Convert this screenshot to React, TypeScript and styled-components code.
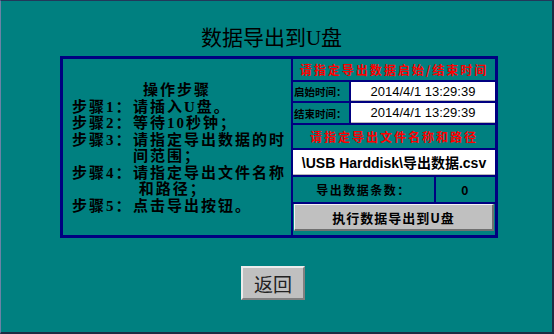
import React from "react"
import styled, { createGlobalStyle } from "styled-components"

const navy = "#000080"
const teal = "#008080"

const GlobalStyle = createGlobalStyle`
  html, body {
    margin: 0;
    padding: 0;
    background: ${teal};
  }
`

const Screen = styled.div`
  box-sizing: border-box;
  width: 554px;
  height: 334px;
  background: ${teal};
  border-top: 1px solid #22385a;
  border-left: 1px solid #6a82a6;
  border-right: 2px solid #1d2b42;
  border-bottom: 2px solid #1d2b42;
  display: flex;
  flex-direction: column;
  font-family: "Liberation Serif", "Noto Sans CJK SC", serif;
  color: #000;
`

const Title = styled.h1`
  margin: 24px 0 0 0;
  padding-right: 10px;
  text-align: center;
  font-size: 21px;
  font-weight: 400;
  line-height: 26px;
`

const Panel = styled.div`
  box-sizing: border-box;
  margin: 5px 0 0 59px;
  width: 438px;
  height: 182px;
  border: 3px solid ${navy};
  display: flex;
`

const Steps = styled.div`
  flex: 1;
  display: flex;
  flex-direction: column;
  justify-content: center;
  padding: 2px 0 0 9px;
  font-size: 15px;
  line-height: 16.5px;
  letter-spacing: 2px;
  font-weight: 700;
`

const StepsHeading = styled.div`
  text-align: center;
  padding-right: 9px;
`

const Step = styled.div`
  display: grid;
  grid-template-columns: 61px 1fr;
`

const StepLine = styled.div`
  white-space: pre;
`

const SideBar = styled.div`
  width: 202px;
  border-left: 2px solid ${navy};
  background: ${navy};
  display: grid;
  grid-template-rows: 21px 19px 20px 23px 25px 25px 1fr;
  row-gap: 2px;
`

const Notice = styled.div`
  background: ${teal};
  color: #ff0000;
  font-family: "Noto Sans CJK SC", sans-serif;
  font-size: 12px;
  font-weight: 700;
  letter-spacing: 2px;
  display: flex;
  align-items: center;
  justify-content: center;
`

const Row = styled.div<{ $cols: string }>`
  display: grid;
  grid-template-columns: ${p => p.$cols};
  column-gap: 2px;
`

const Label = styled.div<{ $size?: number; $center?: boolean }>`
  background: ${teal};
  font-family: "Noto Sans CJK SC", sans-serif;
  font-size: ${p => p.$size ?? 10.5}px;
  font-weight: 700;
  letter-spacing: ${p => (p.$center ? 1.5 : 0)}px;
  display: flex;
  align-items: center;
  justify-content: ${p => (p.$center ? "center" : "flex-start")};
  padding-left: ${p => (p.$center ? 0 : 1)}px;
  white-space: nowrap;
`

const Value = styled.div<{ $bold?: boolean; $size?: number }>`
  box-sizing: border-box;
  background: #fff;
  border-bottom: 1px solid #b8b8b8;
  font-family: "Liberation Sans", "Noto Sans CJK SC", sans-serif;
  font-size: ${p => p.$size ?? 13}px;
  font-weight: ${p => (p.$bold ? 700 : 400)};
  display: flex;
  align-items: center;
  justify-content: center;
  white-space: nowrap;
`

const ButtonCell = styled.div`
  background: ${teal};
  padding: 0 1px 4px 1px;
  display: flex;
`

const ActionButton = styled.button`
  flex: 1;
  margin: 0;
  padding: 0;
  background: #c0c0c0;
  border-top: 1px solid #f4f4f4;
  border-left: 1px solid #f4f4f4;
  border-right: 2px solid #707070;
  border-bottom: 2px solid #707070;
  font-family: "Noto Sans CJK SC", sans-serif;
  font-size: 13px;
  font-weight: 700;
  letter-spacing: 1px;
  color: #000;
`

const BackButton = styled.button`
  box-sizing: border-box;
  margin: 28px 0 0 240px;
  width: 64px;
  height: 34px;
  padding: 0;
  background: #c0c0c0;
  border-top: 2px solid #ececec;
  border-left: 2px solid #ececec;
  border-right: 2px solid #808080;
  border-bottom: 2px solid #808080;
  font-family: "Noto Sans CJK SC", sans-serif;
  font-size: 19px;
  font-weight: 400;
  color: #222;
`

const steps: [string, string[]][] = [
  ["步骤1：", ["请插入U盘。"]],
  ["步骤2：", ["等待10秒钟；"]],
  ["步骤3：", ["请指定导出数据的时", "间范围；"]],
  ["步骤4：", ["请指定导出文件名称", " 和路径；"]],
  ["步骤5：", ["点击导出按钮。"]],
]

const App: React.FC = () => {
  return (
    <>
      <GlobalStyle />
      <Screen>
        <Title>数据导出到U盘</Title>
        <Panel>
          <Steps>
            <StepsHeading>操作步骤</StepsHeading>
            {steps.map(([label, lines]) => (
              <Step key={label}>
                <span>{label}</span>
                <span>
                  {lines.map(l => (
                    <StepLine key={l}>{l}</StepLine>
                  ))}
                </span>
              </Step>
            ))}
          </Steps>
          <SideBar>
            <Notice>请指定导出数据启始/结束时间</Notice>
            <Row $cols="56px 1fr">
              <Label>启始时间：</Label>
              <Value>2014/4/1 13:29:39</Value>
            </Row>
            <Row $cols="56px 1fr">
              <Label>结束时间：</Label>
              <Value>2014/4/1 13:29:39</Value>
            </Row>
            <Notice>请指定导出文件名称和路径</Notice>
            <Value $bold $size={14}>\USB Harddisk\导出数据.csv</Value>
            <Row $cols="141px 1fr">
              <Label $size={12} $center>导出数据条数：</Label>
              <Label $size={12} $center>0</Label>
            </Row>
            <ButtonCell>
              <ActionButton>执行数据导出到U盘</ActionButton>
            </ButtonCell>
          </SideBar>
        </Panel>
        <BackButton>返回</BackButton>
      </Screen>
    </>
  )
}

export default App
